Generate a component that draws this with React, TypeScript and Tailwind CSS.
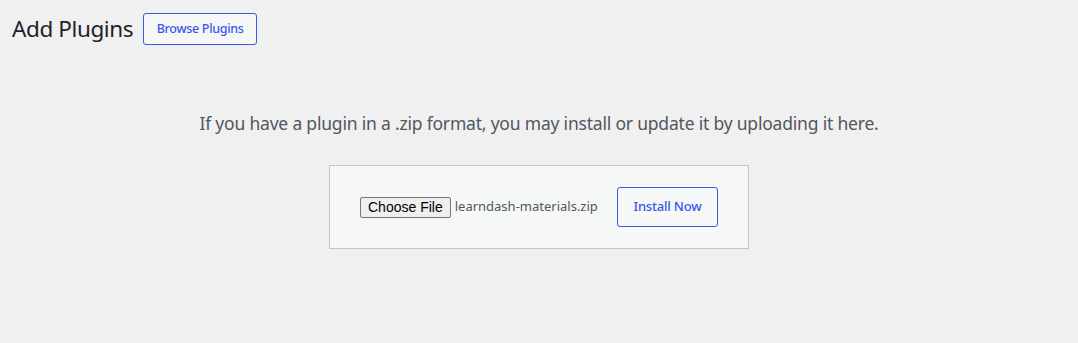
export default function App() {
  return (
    <div className="min-h-[343px] w-full bg-[#f0f0f1] font-['Noto_Sans',sans-serif] text-[#1d2327]">
      {/* Page title */}
      <div className="flex items-center pl-3 pt-[13px]">
        <h1 className="text-[22.5px] leading-[30px] font-normal tracking-[-0.4px]">Add Plugins</h1>
        <button className="ml-[10px] h-8 w-[114px] whitespace-nowrap rounded-[3px] border border-[#3858e9] bg-[#f6f7f7] text-[12.5px] font-medium tracking-[-0.3px] text-[#3858e9]">
          Browse Plugins
        </button>
      </div>

      {/* Upload area */}
      <div className="flex flex-col items-center">
        <p className="mt-[65px] text-[17.5px] leading-[27px] text-[#50575e] tracking-[-0.2px]">
          If you have a plugin in a .zip format, you may install or update it by uploading it here.
        </p>
        <div className="mt-[28px] flex items-center gap-5 border border-[#c3c4c7] bg-[#f6f7f7] px-[30px] py-[21px]">
          <div className="flex w-[237px] shrink-0 items-center gap-1 whitespace-nowrap">
            <span className="shrink-0 rounded-[2px] border border-[#767676] bg-[#efefef] px-[7px] font-['Liberation_Sans',sans-serif] text-[14px] leading-[19px] text-black">
              Choose File
            </span>
            <span className="text-[13px] text-[#50575e]">learndash-materials.zip</span>
          </div>
          <button className="h-10 w-[101px] shrink-0 whitespace-nowrap rounded-[3px] border border-[#3858e9] bg-[#f6f7f7] text-[13px] font-medium tracking-[-0.2px] text-[#3858e9]">
            Install Now
          </button>
        </div>
      </div>
    </div>
  );
}
